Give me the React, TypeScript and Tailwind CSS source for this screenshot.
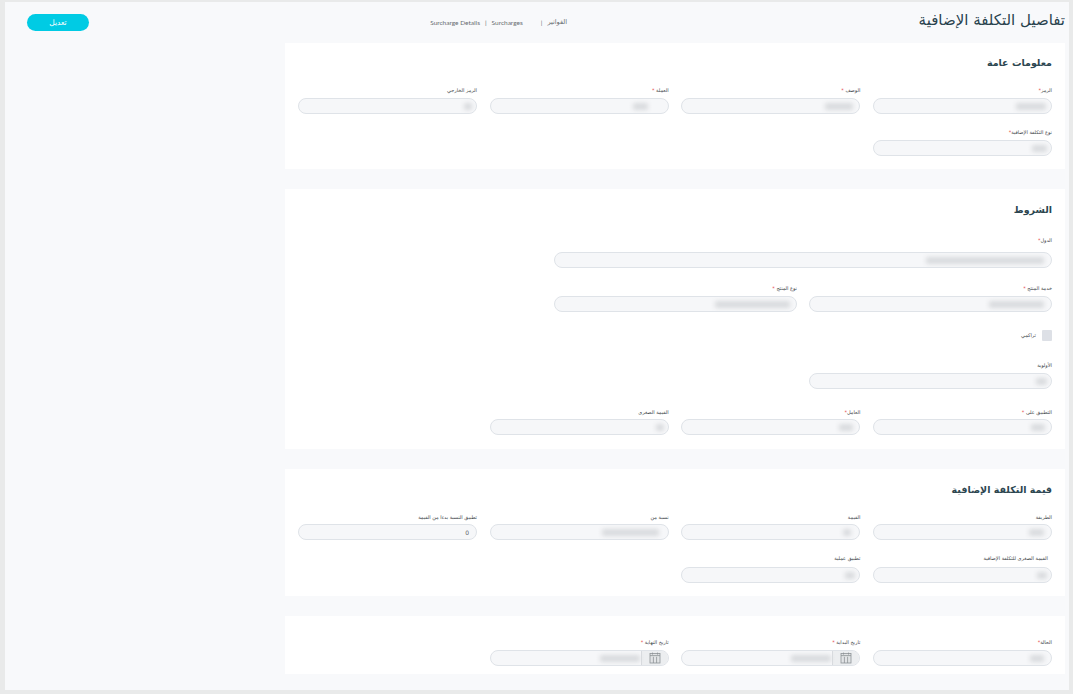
const font = "font-['DejaVu_Sans',sans-serif]";

function Calendar() {
  return (
    <svg width="12" height="12" viewBox="0 0 12 12" fill="#e2e4e6" stroke="#8d9296" strokeWidth="0.8">
      <rect x="1" y="1.5" width="10" height="9.5" />
      <path d="M1 3.6h10M3.5 .6v2M8.5 .6v2M4.4 4.8V11M7.6 4.8V11" fill="none" />
    </svg>
  );
}

function Field({
  label,
  star,
  value = "w-[28px] mr-[6px]",
  date,
  plain,
  gap = "mb-[5px]",
  labelPad = "",
}: {
  label: string;
  star?: string;
  value?: string;
  date?: boolean;
  plain?: string;
  gap?: string;
  labelPad?: string;
}) {
  return (
    <div>
      <div className={`h-[6px] leading-[6px] text-[5px] text-[#3d4448] whitespace-nowrap ${gap} ${labelPad}`}>
        {label}
        {star && <span className="text-[#e5484d]">{star}</span>}
      </div>
      <div className="h-[16px] rounded-full border border-[#dfe3e8] bg-[#f6f7f9] flex items-center overflow-hidden">
        {date && (
          <span className="h-full w-[27px] shrink-0 flex items-center justify-center bg-[#eceef0] border-l border-[#d8dbdf]">
            <Calendar />
          </span>
        )}
        {plain ? (
          <span className="pr-[7px] text-[6px] text-[#5c6266]">{plain}</span>
        ) : (
          <span className={`h-[7px] rounded-[2px] bg-[#d9dbde] blur-[2px] ${value}`} />
        )}
      </div>
    </div>
  );
}

function Card({ className, children }: { className: string; children: React.ReactNode }) {
  return <section className={`bg-white px-[13px] ${className}`}>{children}</section>;
}

function Title({ children }: { children: React.ReactNode }) {
  return <h2 className="h-[16px] leading-[16px] text-[9.5px] font-bold text-[#2c4650]">{children}</h2>;
}

const grid = "grid grid-cols-4 gap-x-[12.67px]";

export default function App() {
  return (
    <div
      dir="rtl"
      className={`h-[694px] w-[1073px] overflow-hidden bg-[#e9eaea] pt-[2px] pr-[4px] pl-[5px] pb-[4px] ${font}`}
    >
      <div className="h-[688px] bg-[#f8f9fb] flex flex-col pr-[4px]">
        <header className="h-[41px] shrink-0 flex items-center pl-[22px]">
          <h1 className="w-[146px] whitespace-nowrap text-[15px] leading-[20px] text-[#28424d] -mt-[5px]">
            تفاصيل التكلفة الإضافية
          </h1>
          <nav className="mr-[352px] flex items-center gap-[5px] text-[6.5px] text-[#666c70] font-['Lato',sans-serif] mt-[1px]">
            <span className={font}>الفواتير</span>
            <span>|</span>
            <span className="mr-[13px]">Surcharges</span>
            <span>|</span>
            <span>Surcharge Details</span>
          </nav>
          <button className="mr-auto h-[17px] w-[62px] rounded-full bg-[#00cbe4] text-white text-[7.5px]">تعديل</button>
        </header>

        <main className="w-[780px] flex flex-col gap-[20px]">
          <Card className="h-[126px] pt-[12px]">
            <Title>معلومات عامة</Title>
            <div className={`${grid} mt-[16px]`}>
              <Field label="الرمز" star="*" value="w-[30px] mr-[5px]" />
              <Field label="الوصف" star=" *" />
              <Field label="العملة" star=" *" value="w-[15px] mr-[20px]" />
              <Field label="الرمز الخارجي" value="w-[8px] mr-[4px]" />
            </div>
            <div className={`${grid} mt-[15px]`}>
              <Field label="نوع التكلفة الإضافية" star="*" value="w-[15px] mr-[4px]" />
            </div>
          </Card>

          <Card className="h-[260px] pt-[13px]">
            <Title>الشروط</Title>
            <div className="mt-[19px] w-[498px]">
              <Field label="الدول" star="*" value="w-[118px] mr-[7px]" gap="mb-[9px]" />
            </div>
            <div className="mt-[17px] w-[498px] grid grid-cols-2 gap-x-[12px]">
              <Field label="خدمة المنتج" star=" *" value="w-[55px] mr-[7px]" />
              <Field label="نوع المنتج" star=" *" value="w-[75px] mr-[6px]" />
            </div>
            <div className="mt-[18px] flex items-center gap-[6px] h-[11px]">
              <span className="h-[11px] w-[10px] rounded-[1px] bg-[#dde0e6]" />
              <span className="text-[5px] text-[#3d4448]">تراكمي</span>
            </div>
            <div className="mt-[21px] w-[243px]">
              <Field label="الأولوية" value="w-[11px] mr-[4px]" />
            </div>
            <div className={`${grid} mt-[20px]`}>
              <Field label="التطبيق على" star=" *" gap="mb-[4px]" value="w-[14px] mr-[6px]" />
              <Field label="العامل" star="*" gap="mb-[4px]" value="w-[14px] mr-[6px]" />
              <Field label="القيمة الصغرى" gap="mb-[4px]" value="w-[8px] mr-[4px]" />
            </div>
          </Card>

          <Card className="h-[127px] pt-[13px]">
            <Title>قيمة التكلفة الإضافية</Title>
            <div className={`${grid} mt-[16px]`}>
              <Field label="الطريقة" gap="mb-[4px]" value="w-[15px] mr-[7px]" />
              <Field label="القيمة" gap="mb-[4px]" value="w-[8px] mr-[8px]" />
              <Field label="نسبة من" gap="mb-[4px]" value="w-[57px] mr-[9px]" />
              <Field label="تطبيق النسبة بدءا من القيمة" gap="mb-[4px]" plain="0" />
            </div>
            <div className={`${grid} mt-[15px]`}>
              <Field label="القيمة الصغرى للتكلفة الإضافية" gap="mb-[6px]" labelPad="pr-[4px]" value="w-[10px] mr-[4px]" />
              <Field label="تطبيق عملية" gap="mb-[6px]" value="w-[10px] mr-[4px]" />
            </div>
          </Card>

          <Card className="h-[58px] pt-[23px]">
            <div className={grid}>
              <Field label="الحالة" star="*" value="w-[14px] mr-[7px]" />
              <Field label="تاريخ البداية" star=" *" value="w-[40px] mr-[1px]" date />
              <Field label="تاريخ النهاية" star=" *" value="w-[40px] mr-[1px]" date />
            </div>
          </Card>
        </main>
      </div>
    </div>
  );
}
